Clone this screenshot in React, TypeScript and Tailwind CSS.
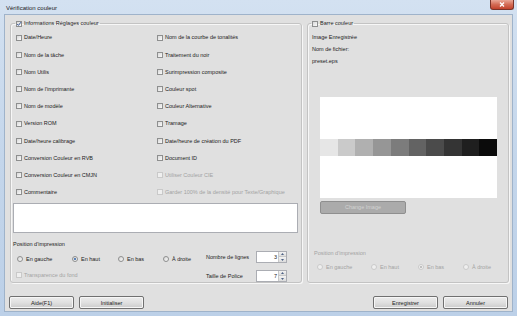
import React from "react";

const FONT = "font-['Liberation_Sans',Arial,sans-serif]";

function Check({ checked = false, disabled = false }: { checked?: boolean; disabled?: boolean }) {
  return (
    <span
      className={`relative inline-block w-[6px] h-[6px] shrink-0 border ${
        disabled
          ? "border-[#c9c9c9] bg-[#efefef]"
          : "border-[#8e8f8f] bg-gradient-to-br from-[#d9d9d9] to-[#fafafa]"
      }`}
    >
      {checked && (
        <svg className="absolute left-[-1px] top-[-1px]" width="6" height="6" viewBox="0 0 6 6">
          <path d="M1.2 3 L2.5 4.4 L4.9 1.2" stroke="#3a5a99" strokeWidth="1" fill="none" />
        </svg>
      )}
    </span>
  );
}

function Radio({ checked = false, disabled = false }: { checked?: boolean; disabled?: boolean }) {
  return (
    <span
      className={`relative inline-flex items-center justify-center w-[6px] h-[6px] shrink-0 rounded-full border ${
        disabled ? "border-[#cacaca] bg-[#efefef]" : "border-[#8e8f8f] bg-gradient-to-br from-[#d6d6d6] to-[#fafafa]"
      }`}
    >
      {checked && (
        <span
          className={`block w-[2px] h-[2px] rounded-full ${disabled ? "bg-[#b0b0b0]" : "bg-[#2d62a8]"}`}
        />
      )}
    </span>
  );
}

function Spin({ value }: { value: string }) {
  return (
    <div className="flex w-[31px] h-[12px] border border-[#abadb3] bg-white">
      <div className="flex-1 flex items-center justify-end pr-[1px] leading-[10px]">{value}</div>
      <div className="w-[8px] flex flex-col">
        <div className="flex-1 flex items-center justify-center bg-gradient-to-b from-[#f3f3f3] to-[#dcdcdc] border-l border-b border-[#c8c8c8]">
          <svg width="3" height="2" viewBox="0 0 3 2">
            <path d="M0 2 L1.5 0 L3 2 Z" fill="#4d6185" />
          </svg>
        </div>
        <div className="flex-1 flex items-center justify-center bg-gradient-to-b from-[#f3f3f3] to-[#dcdcdc] border-l border-[#c8c8c8]">
          <svg width="3" height="2" viewBox="0 0 3 2">
            <path d="M0 0 L1.5 2 L3 0 Z" fill="#4d6185" />
          </svg>
        </div>
      </div>
    </div>
  );
}

function Btn({ label }: { label: string }) {
  return (
    <div className="w-[65px] h-[13px] flex items-center justify-center rounded-[2px] border border-[#707070] bg-gradient-to-b from-[#ececec] via-[#e0e0e0] to-[#cbcbcb] shadow-[inset_0_0_0_1px_#f6f6f6] leading-[6px]">
      {label}
    </div>
  );
}

const leftItems = [
  "Date/Heure",
  "Nom de la tâche",
  "Nom Utilis",
  "Nom de l'imprimante",
  "Nom de modèle",
  "Version ROM",
  "Date/heure calibrage",
  "Conversion Couleur en RVB",
  "Conversion Couleur en CMJN",
  "Commentaire",
];

const rightItems: [string, boolean][] = [
  ["Nom de la courbe de tonalités", false],
  ["Traitement du noir", false],
  ["Surimpression composite", false],
  ["Couleur spot", false],
  ["Couleur Alternative", false],
  ["Tramage", false],
  ["Date/heure de création du PDF", false],
  ["Document ID", false],
  ["Utiliser Couleur CIE", true],
  ["Garder 100% de la densité pour Texte/Graphique", true],
];

const steps = [
  "bg-[#e6e6e6]",
  "bg-[#cacaca]",
  "bg-[#b0b0b0]",
  "bg-[#969696]",
  "bg-[#7c7c7c]",
  "bg-[#636363]",
  "bg-[#4b4b4b]",
  "bg-[#343434]",
  "bg-[#1f1f1f]",
  "bg-[#0b0b0b]",
];

const groupBox =
  "rounded-[3px] border border-[#c3c3c3] shadow-[inset_1px_1px_0_#f7f7f7,1px_1px_0_#f7f7f7] m-0 p-0 min-w-0";

export default function App() {
  return (
    <div
      className={`w-[517px] h-[316px] flex flex-col bg-gradient-to-b from-[#d3e1f1] via-[#c4d6eb] to-[#bcd0e8] ${FONT} text-[5.5px] text-[#1b1b1b] overflow-hidden`}
    >
      {/* Title bar */}
      <div className="h-[14px] shrink-0 flex items-start justify-between">
        <span className="pl-[6px] pt-[5px] leading-[6px] text-[6px] text-[#1a1a1a]">Vérification couleur</span>
        <div className="mr-[3px] w-[24px] h-[10px] rounded-b-[3px] border border-t-0 border-[#7a3328] bg-gradient-to-b from-[#e9a696] via-[#d36b55] to-[#c2412b] flex items-center justify-center">
          <svg width="6" height="5" viewBox="0 0 6 5">
            <path d="M1 0.5 L5 4.5 M5 0.5 L1 4.5" stroke="#ffffff" strokeWidth="1.3" />
          </svg>
        </div>
      </div>

      {/* Client */}
      <div className="mx-[4px] h-[298px] shrink-0 bg-[#e0e0e0] border border-[#9fb3ca] flex flex-col">
        <div className="flex pl-[5px] pt-[5px] gap-[5px]">
          {/* Left group */}
          <fieldset className={`w-[292px] h-[263px] ${groupBox}`}>
            <legend className="ml-[4px] px-[1px] h-[7px] flex items-center gap-[2px] leading-[7px]">
              <Check checked />
              <span>Informations Réglages couleur</span>
            </legend>
            <div className="mt-[2px] flex flex-col pl-[5px]">
              {leftItems.map((l, i) => (
                <div key={l} className="h-[17.2px] flex items-center">
                  <div className="w-[141px] flex items-center gap-[2px]">
                    <Check />
                    <span>{l}</span>
                  </div>
                  <div className={`flex items-center gap-[2px] ${rightItems[i][1] ? "text-[#a3a3a3]" : ""}`}>
                    <Check disabled={rightItems[i][1]} />
                    <span>{rightItems[i][0]}</span>
                  </div>
                </div>
              ))}
            </div>
            <div className="mt-[2px] ml-[2px] w-[285px] h-[30px] bg-white border border-[#abadb3]" />
            <div className="mt-[6px] h-[10px] pl-[2px] flex items-center">Position d&apos;impression</div>
            <div className="flex">
              <div className="w-[195px] flex flex-col pl-[6px]">
                <div className="mt-[5px] h-[10px] flex items-center">
                  <div className="w-[55px] flex items-center gap-[3px]">
                    <Radio />
                    <span>En gauche</span>
                  </div>
                  <div className="w-[46px] flex items-center gap-[3px]">
                    <Radio checked />
                    <span>En haut</span>
                  </div>
                  <div className="w-[45px] flex items-center gap-[3px]">
                    <Radio />
                    <span>En bas</span>
                  </div>
                  <div className="flex items-center gap-[3px]">
                    <Radio />
                    <span>À droite</span>
                  </div>
                </div>
                <div className="mt-[6px] h-[10px] -ml-[1px] flex items-center gap-[2px] text-[#a3a3a3]">
                  <Check disabled />
                  <span>Transparence du fond</span>
                </div>
              </div>
              <div className="flex flex-col">
                <div className="mt-[2px] h-[12px] flex items-center">
                  <span className="w-[50px]">Nombre de lignes</span>
                  <Spin value="3" />
                </div>
                <div className="mt-[7px] h-[12px] flex items-center">
                  <span className="w-[50px]">Taille de Police</span>
                  <Spin value="7" />
                </div>
              </div>
            </div>
          </fieldset>

          {/* Right group */}
          <fieldset className={`w-[202px] h-[263px] ${groupBox}`}>
            <legend className="ml-[3px] px-[1px] h-[7px] flex items-center gap-[2px] leading-[7px]">
              <Check />
              <span>Barre couleur</span>
            </legend>
            <div className="pl-[4px] flex flex-col">
              <div className="mt-[4px] h-[12px] flex items-center">Image Enregistrée</div>
              <div className="h-[13px] flex items-center">Nom de fichier:</div>
              <div className="h-[11px] flex items-center">preset.eps</div>
            </div>
            <div className="ml-[12px] mt-[30px] w-[177px] h-[101px] bg-white flex flex-col">
              <div className="mt-[42px] h-[17px] flex">
                {steps.map((s) => (
                  <div key={s} className={`flex-1 ${s}`} />
                ))}
              </div>
            </div>
            <div className="ml-[12px] mt-[3px] w-[86px] h-[13px] flex items-center justify-center rounded-[2px] border border-[#8f8f8f] bg-[#ababab] text-[#d2d2d2]">
              Change Image
            </div>
            <div className="mt-[34px] pl-[6px] h-[10px] flex items-center text-[#a3a3a3]">Position d&apos;impression</div>
            <div className="mt-[4px] pl-[9px] h-[10px] flex items-center text-[#a3a3a3]">
              <div className="w-[54px] flex items-center gap-[3px]">
                <Radio disabled />
                <span>En gauche</span>
              </div>
              <div className="w-[47px] flex items-center gap-[3px]">
                <Radio disabled />
                <span>En haut</span>
              </div>
              <div className="w-[45px] flex items-center gap-[3px]">
                <Radio disabled checked />
                <span>En bas</span>
              </div>
              <div className="flex items-center gap-[3px]">
                <Radio disabled />
                <span>À droite</span>
              </div>
            </div>
          </fieldset>
        </div>

        {/* Buttons */}
        <div className="mt-[13px] px-[4px] flex justify-between">
          <div className="flex gap-[5px]">
            <Btn label="Aide(F1)" />
            <Btn label="Initialiser" />
          </div>
          <div className="flex gap-[5px]">
            <Btn label="Enregistrer" />
            <Btn label="Annuler" />
          </div>
        </div>
      </div>
    </div>
  );
}
